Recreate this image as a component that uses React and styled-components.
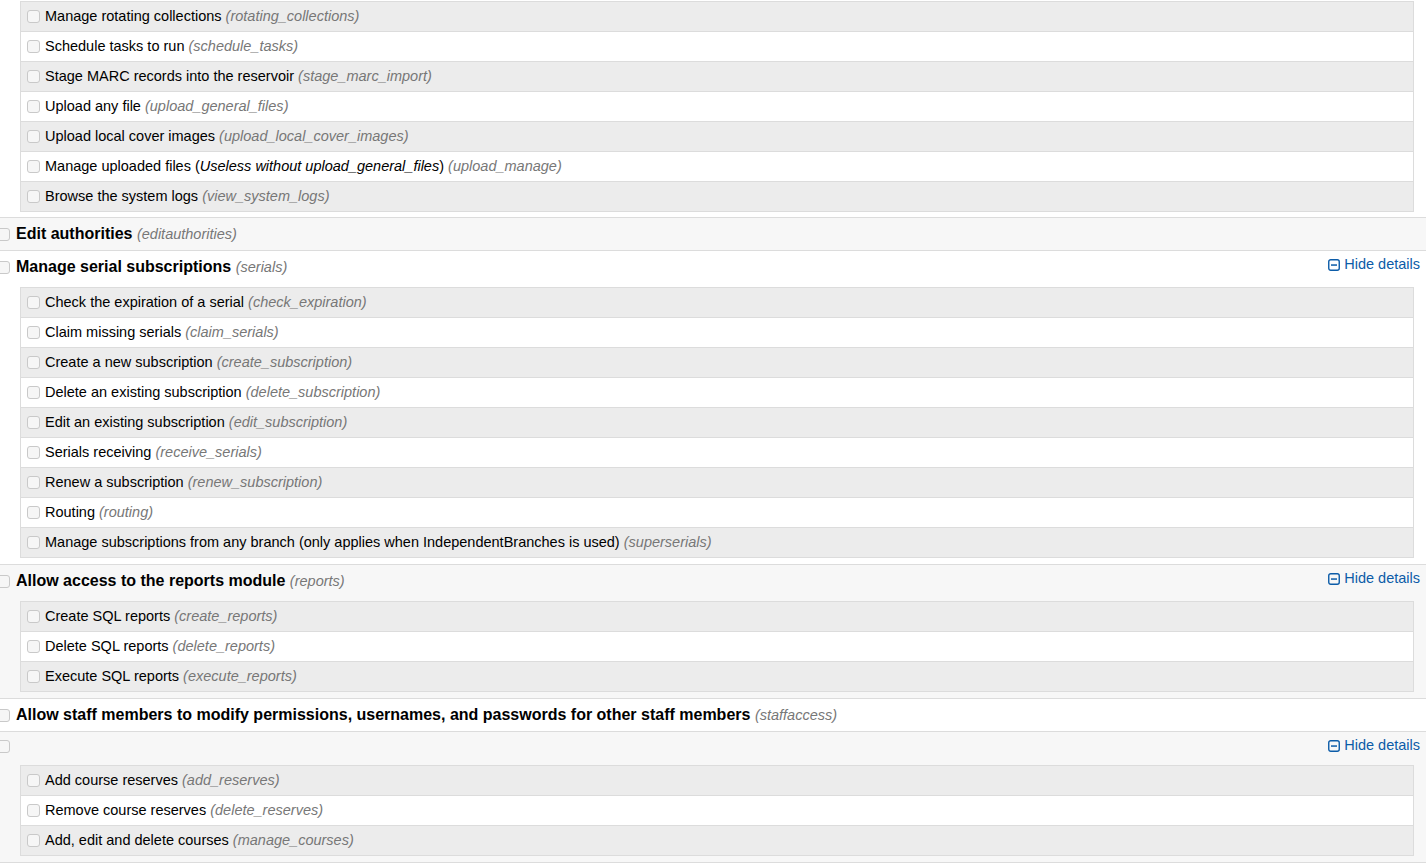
import React from 'react';
import styled, { createGlobalStyle } from 'styled-components';

const sections = [
  {
    flag: 'tools',
    title: null,
    continued: true,
    children: [
      ['Manage rotating collections', 'rotating_collections'],
      ['Schedule tasks to run', 'schedule_tasks'],
      ['Stage MARC records into the reservoir', 'stage_marc_import'],
      ['Upload any file', 'upload_general_files'],
      ['Upload local cover images', 'upload_local_cover_images'],
      [
        <>
          Manage uploaded files (<em>Useless without upload_general_files</em>)
        </>,
        'upload_manage',
      ],
      ['Browse the system logs', 'view_system_logs'],
    ],
  },
  { flag: 'editauthorities', title: 'Edit authorities' },
  {
    flag: 'serials',
    title: 'Manage serial subscriptions',
    children: [
      ['Check the expiration of a serial', 'check_expiration'],
      ['Claim missing serials', 'claim_serials'],
      ['Create a new subscription', 'create_subscription'],
      ['Delete an existing subscription', 'delete_subscription'],
      ['Edit an existing subscription', 'edit_subscription'],
      ['Serials receiving', 'receive_serials'],
      ['Renew a subscription', 'renew_subscription'],
      ['Routing', 'routing'],
      ['Manage subscriptions from any branch (only applies when IndependentBranches is used)', 'superserials'],
    ],
  },
  {
    flag: 'reports',
    title: 'Allow access to the reports module',
    children: [
      ['Create SQL reports', 'create_reports'],
      ['Delete SQL reports', 'delete_reports'],
      ['Execute SQL reports', 'execute_reports'],
    ],
  },
  {
    flag: 'staffaccess',
    title: 'Allow staff members to modify permissions, usernames, and passwords for other staff members',
  },
  {
    flag: null,
    title: null,
    children: [
      ['Add course reserves', 'add_reserves'],
      ['Remove course reserves', 'delete_reserves'],
      ['Add, edit and delete courses', 'manage_courses'],
    ],
  },
];

function MinusSquare() {
  return (
    <svg width="12" height="12" viewBox="0 0 12 12" aria-hidden="true">
      <rect x="0.75" y="0.75" width="10.5" height="10.5" rx="2" fill="none" stroke="currentColor" strokeWidth="1.4" />
      <rect x="3" y="5.3" width="6" height="1.5" fill="currentColor" />
    </svg>
  );
}

function PermissionTree() {
  return (
    <>
      <GlobalStyle />
      <List>
        {sections.map((section, i) => (
          <Parent
            key={i}
            $shaded={i % 2 === 1}
            $nested={!!section.children}
            $continued={section.continued}
          >
            {!section.continued && (
              <ParentHead $short={!section.title}>
                <ParentLabel>
                  <Box type="checkbox" />
                  {section.title && (
                    <span>
                      <ParentTitle>{section.title}</ParentTitle> <Code>({section.flag})</Code>
                    </span>
                  )}
                </ParentLabel>
                {section.children && (
                  <Toggle href="#">
                    <MinusSquare />
                    Hide details
                  </Toggle>
                )}
              </ParentHead>
            )}
            {section.children && (
              <Panel $first={section.continued}>
                {section.children.map(([label, code], j) => (
                  <Child key={code} $shaded={j % 2 === 0}>
                    <Box type="checkbox" $child />
                    <span>
                      {label} <Code>({code})</Code>
                    </span>
                  </Child>
                ))}
              </Panel>
            )}
          </Parent>
        ))}
      </List>
    </>
  );
}

const GlobalStyle = createGlobalStyle`
  body {
    margin: 0;
    background: #fff;
    font-family: "Liberation Sans", Arial, sans-serif;
    color: #000;
    overflow: hidden;
  }
`;

const List = styled.ul`
  list-style: none;
  margin: 0;
  padding: 0;
`;

const Parent = styled.li`
  background: ${props => (props.$shaded ? '#f7f7f7' : '#fff')};
  border-bottom: 1px solid #dcdcdc;
  padding-bottom: ${props => (props.$continued ? '5px' : props.$nested ? '6px' : '0')};
`;

const ParentHead = styled.div`
  height: ${props => (props.$short ? '29px' : '32px')};
  display: flex;
  align-items: center;
  justify-content: space-between;
  padding-right: 6px;
`;

const ParentLabel = styled.label`
  display: flex;
  align-items: center;
  gap: 6px;
  margin-left: -3px;
  white-space: nowrap;
`;

const ParentTitle = styled.span`
  font-size: 16px;
  font-weight: bold;
`;

const Code = styled.span`
  font-size: 14.5px;
  font-style: italic;
  color: #777;
`;

const Box = styled.input`
  appearance: none;
  width: 13px;
  height: 13px;
  margin: ${props => (props.$child ? '2px 0 0' : '0')};
  flex: none;
  border: 1px solid #c9c9c9;
  border-radius: 3px;
  background: #f6f6f6;
`;

const Toggle = styled.a`
  display: flex;
  align-items: center;
  gap: 4px;
  align-self: flex-start;
  margin-top: 5px;
  color: #0c5ca8;
  font-size: 14.5px;
  line-height: 17px;
  text-decoration: none;
`;

const Panel = styled.div`
  margin: ${props => (props.$first ? '1px' : '4px')} 12px 0 20px;
  border: 1px solid #dcdcdc;
  border-top: none;
`;

const Child = styled.label`
  box-sizing: border-box;
  display: flex;
  align-items: center;
  gap: 5px;
  height: 30px;
  padding: 0 0 2px 6px;
  border-top: 1px solid #dcdcdc;
  background: ${props => (props.$shaded ? '#ececec' : '#fff')};
  font-size: 14.5px;
  white-space: nowrap;
`;

export default PermissionTree;
